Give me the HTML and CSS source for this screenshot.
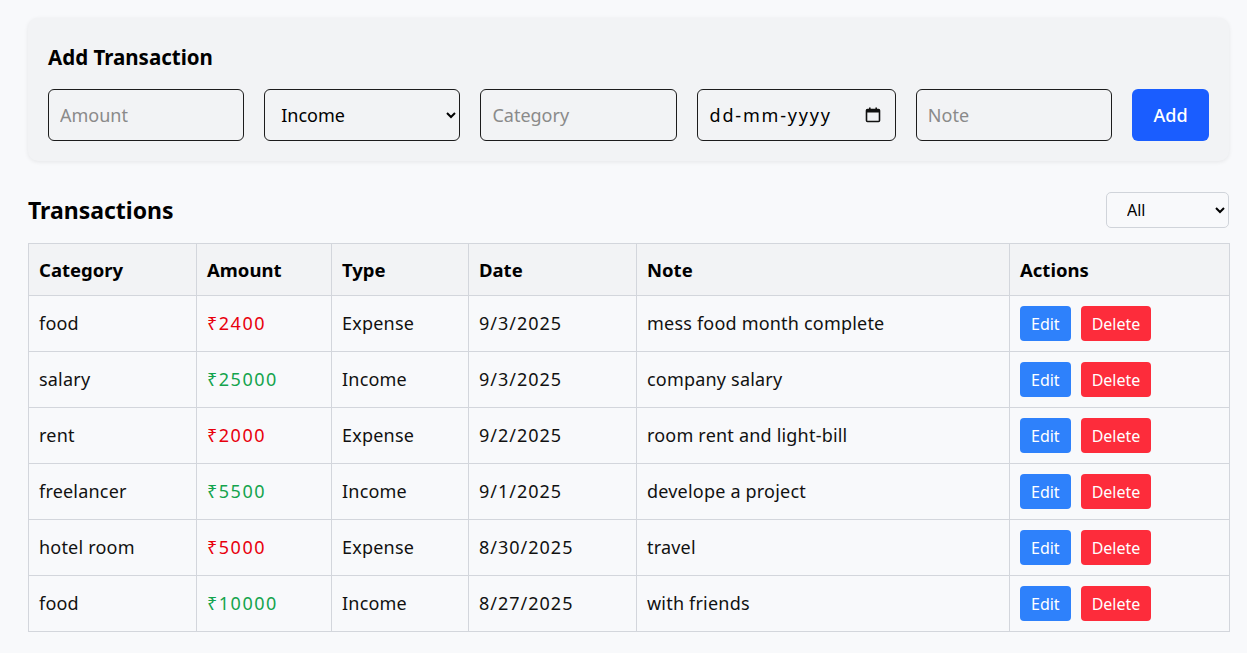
FILE: index.html
```html
<!DOCTYPE html>
<html lang="en">
<head>
<meta charset="utf-8">
<title>Transactions</title>
<link rel="stylesheet" href="styles.css">
</head>
<body>
<main class="page">
  <section class="card">
    <h2 class="card-title">Add Transaction</h2>
    <form class="form-row">
      <input class="field" type="text" placeholder="Amount">
      <select class="field field-select">
        <option>Income</option>
        <option>Expense</option>
      </select>
      <input class="field" type="text" placeholder="Category">
      <div class="field field-date">
        <span>dd-mm-yyyy</span>
        <svg class="cal" width="18" height="18" viewBox="0 0 18 18" aria-hidden="true">
          <rect x="2.5" y="3.5" width="13" height="12" rx="1" fill="none" stroke="#111" stroke-width="1.6"/>
          <rect x="2.5" y="3.5" width="13" height="3" fill="#111"/>
          <rect x="5" y="1.5" width="1.6" height="3" fill="#111"/>
          <rect x="11.4" y="1.5" width="1.6" height="3" fill="#111"/>
        </svg>
      </div>
      <input class="field" type="text" placeholder="Note">
      <button type="button" class="btn-add">Add</button>
    </form>
  </section>

  <div class="list-head">
    <h2 class="list-title">Transactions</h2>
    <select class="filter">
      <option>All</option>
      <option>Income</option>
      <option>Expense</option>
    </select>
  </div>

  <table class="tx-table">
    <colgroup>
      <col class="c-cat"><col class="c-amt"><col class="c-type"><col class="c-date"><col class="c-note"><col class="c-act">
    </colgroup>
    <thead>
      <tr><th>Category</th><th>Amount</th><th>Type</th><th>Date</th><th>Note</th><th>Actions</th></tr>
    </thead>
    <tbody>
      <tr><td>food</td><td class="amt neg">₹2400</td><td>Expense</td><td class="date">9/3/2025</td><td>mess food month complete</td><td><div class="acts"><button class="btn-edit">Edit</button><button class="btn-del">Delete</button></div></td></tr>
      <tr><td>salary</td><td class="amt pos">₹25000</td><td>Income</td><td class="date">9/3/2025</td><td>company salary</td><td><div class="acts"><button class="btn-edit">Edit</button><button class="btn-del">Delete</button></div></td></tr>
      <tr><td>rent</td><td class="amt neg">₹2000</td><td>Expense</td><td class="date">9/2/2025</td><td>room rent and light-bill</td><td><div class="acts"><button class="btn-edit">Edit</button><button class="btn-del">Delete</button></div></td></tr>
      <tr><td>freelancer</td><td class="amt pos">₹5500</td><td>Income</td><td class="date">9/1/2025</td><td>develope a project</td><td><div class="acts"><button class="btn-edit">Edit</button><button class="btn-del">Delete</button></div></td></tr>
      <tr><td>hotel room</td><td class="amt neg">₹5000</td><td>Expense</td><td class="date">8/30/2025</td><td>travel</td><td><div class="acts"><button class="btn-edit">Edit</button><button class="btn-del">Delete</button></div></td></tr>
      <tr><td>food</td><td class="amt pos">₹10000</td><td>Income</td><td class="date">8/27/2025</td><td>with friends</td><td><div class="acts"><button class="btn-edit">Edit</button><button class="btn-del">Delete</button></div></td></tr>
    </tbody>
  </table>
</main>
</body>
</html>
```

FILE: styles.css
```css
* { box-sizing: border-box; }
html, body { margin: 0; padding: 0; }
body {
  background: #f8f9fb;
  font-family: "Noto Sans", "Lato", sans-serif;
  color: #111;
}
.page {
  padding: 18px 18px 20px 28px;
}
.card {
  background: #f2f3f5;
  border-radius: 10px;
  padding: 20px;
  box-shadow: 0 1px 4px rgba(0,0,0,0.08);
}
.card-title {
  margin: 0 0 13px;
  font-size: 20.5px;
  line-height: 38px;
  font-weight: 700;
  color: #000;
}
.form-row {
  display: flex;
  gap: 20px;
  margin: 0;
}
.field {
  flex: 1 1 0;
  min-width: 0;
  height: 52px;
  border: 1px solid #1c1c1c;
  border-radius: 6px;
  background: #f2f3f5;
  padding: 0 11px;
  font-family: inherit;
  font-size: 18px;
  color: #111;
}
.field::placeholder { color: #8a8a8a; }
.field-select {
  padding: 0 10px 0 12px;
  color: #000;
}
.field-date {
  display: flex;
  align-items: center;
  justify-content: space-between;
  padding: 0 13px 0 12px;
  color: #000;
  letter-spacing: 1.8px;
}
.cal { flex: none; }
.btn-add {
  flex: none;
  width: 77px;
  height: 52px;
  padding: 0;
  border: 0;
  border-radius: 6px;
  background: #1a5dff;
  color: #fff;
  font-family: inherit;
  font-size: 18px;
  font-weight: 500;
}
.list-head {
  display: flex;
  align-items: center;
  justify-content: space-between;
  margin: 31px 0 15px;
}
.list-title {
  margin: 0;
  font-size: 23px;
  line-height: 36px;
  font-weight: 700;
  color: #000;
}
.filter {
  width: 123px;
  height: 36px;
  border: 1px solid #d0d4da;
  border-radius: 5px;
  background: #f8f9fb;
  padding: 0 8px 0 16px;
  font-family: inherit;
  font-size: 16px;
  color: #000;
}
.tx-table {
  width: 100%;
  border-collapse: collapse;
  table-layout: fixed;
  font-size: 18px;
}
.c-cat { width: 168px; }
.c-amt { width: 135px; }
.c-type { width: 137px; }
.c-date { width: 168px; }
.c-note { width: 373px; }
.c-act { width: 220px; }
.tx-table th,
.tx-table td {
  border: 1px solid #d3d6dc;
  text-align: left;
  padding: 0 10px;
  line-height: 27px;
}
.tx-table th {
  background: #f2f3f5;
  height: 52px;
  font-size: 18.5px;
  font-weight: 700;
  color: #000;
}
.tx-table td {
  height: 56px;
  color: #111;
  letter-spacing: 0.2px;
}
.tx-table td.amt { letter-spacing: 1.5px; }
.tx-table td.date { letter-spacing: 1px; }
.tx-table td.neg { color: #e8000d; }
.tx-table td.pos { color: #14a44d; }
.acts {
  display: flex;
  gap: 10px;
}
.acts button {
  height: 35px;
  border: 0;
  border-radius: 4px;
  color: #fff;
  font-family: inherit;
  font-size: 16px;
  letter-spacing: 0;
  padding: 0 11px;
}
.btn-edit { background: #2e81fb; }
.btn-del { background: #fd2c3b; }
```
